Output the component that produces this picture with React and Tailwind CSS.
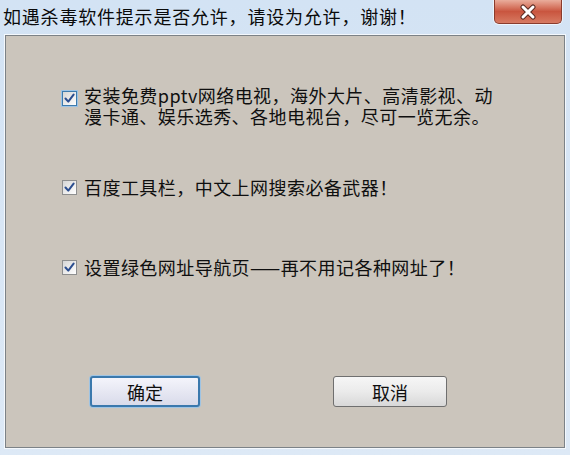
import React from "react";

const font = { fontFamily: '"Noto Sans CJK SC", "Noto Sans", sans-serif' };

function Check({ focus }) {
  return (
    <div
      className={`w-[15px] h-[15px] shrink-0 flex items-center justify-center border ${
        focus ? "border-[#3d7bad] ring-1 ring-[#9cc3e6]" : "border-[#8e8f8f]"
      } bg-gradient-to-br from-[#d6d6d6] to-[#ffffff]`}
    >
      <svg width="11" height="11" viewBox="0 0 11 11">
        <path d="M1.5 5.5 L4.3 8.6 L9.6 1.6" fill="none" stroke="#2a4d8f" strokeWidth="2" strokeLinecap="round" strokeLinejoin="round" />
      </svg>
    </div>
  );
}

export default function App() {
  return (
    <div className="w-[570px] h-[455px] bg-gradient-to-b from-[#d3e3f4] to-[#dde9f6] flex flex-col" style={font}>
      <div className="h-[35px] flex items-start justify-between pl-[3px] pr-[8px]">
        <div className="pt-[5px] text-[18px] leading-[22px] tracking-[0.8px] text-[#0a0a0a]">
          如遇杀毒软件提示是否允许，请设为允许，谢谢！
        </div>
        <div className="w-[68px] h-[24px] rounded-b-[5px] border border-t-0 border-[#8a3b2c] bg-gradient-to-b from-[#e9ad9c] via-[#c9553f] to-[#d77a62] flex items-center justify-center shadow-[0_0_0_1px_rgba(255,255,255,0.6)]">
          <svg width="20" height="16" viewBox="0 0 20 16">
            <path d="M5 3 L15 13 M15 3 L5 13" stroke="#5a2a22" strokeWidth="5" strokeLinecap="round" />
            <path d="M5 3 L15 13 M15 3 L5 13" stroke="#ffffff" strokeWidth="3" strokeLinecap="round" />
          </svg>
        </div>
      </div>
      <div className="mx-[5px] mb-[7px] flex-1 border border-[#7c8287] shadow-[0_0_0_1px_#f4f8fc] bg-[#cbc5bc] flex flex-col pl-[56px] pt-[49px] text-[#0f0f0f]">
        <div className="flex items-start gap-[7px]">
          <div className="mt-[6px]"><Check focus /></div>
          <div className="text-[18px] leading-[21px] tracking-[0.45px]">
            <div>安装免费pptv网络电视，海外大片、高清影视、动</div>
            <div>漫卡通、娱乐选秀、各地电视台，尽可一览无余。</div>
          </div>
        </div>
        <div className="flex items-center gap-[7px] mt-[50px]">
          <Check />
          <div className="text-[18px] leading-[21px] tracking-[0.45px]">百度工具栏，中文上网搜索必备武器！</div>
        </div>
        <div className="flex items-center gap-[7px] mt-[59px]">
          <Check />
          <div className="text-[18px] leading-[21px] tracking-[0.45px]">设置绿色网址导航页——再不用记各种网址了！</div>
        </div>
        <div className="flex mt-[98px] ml-[28px] gap-[133px]">
          <div className="w-[110px] h-[31px] rounded-[3px] border-2 border-[#3b79ad] shadow-[0_0_0_1px_#9ec4e4] bg-gradient-to-b from-[#f4f4fb] to-[#d9dbea] flex items-center justify-center text-[18px] leading-[18px]">
            确定
          </div>
          <div className="w-[114px] h-[31px] rounded-[3px] border border-[#6f6f6f] bg-gradient-to-b from-[#f6f6f6] via-[#ebebeb] to-[#d8d8d8] flex items-center justify-center text-[18px] leading-[18px]">
            取消
          </div>
        </div>
      </div>
    </div>
  );
}
